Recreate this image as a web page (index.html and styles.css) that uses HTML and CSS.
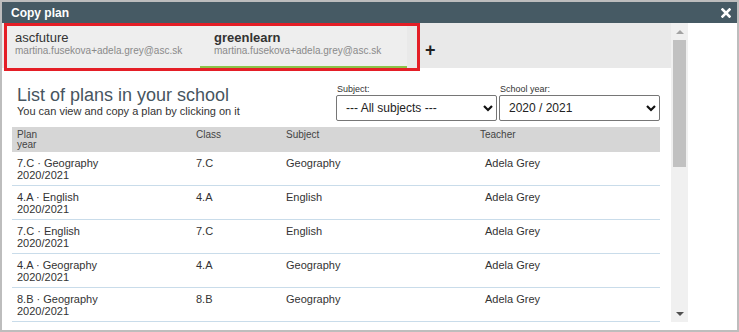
FILE: index.html
```html
<!DOCTYPE html>
<html lang="en">
<head>
  <meta charset="UTF-8" />
  <title>Copy plan</title>
  <link rel="stylesheet" href="styles.css">
</head>
<body>
  <div class="dialog">
    <div class="dialog-title">
      <span>Copy plan</span>
      <svg class="close" width="10" height="10" viewBox="0 0 10 10"><path d="M1.5 1.5 L8.5 8.5 M8.5 1.5 L1.5 8.5" stroke="#fff" stroke-width="2.6" stroke-linecap="square"/></svg>
    </div>
    <div class="dialog-body">
      <div class="scroll-area">
        <div class="scroll-content">
          <div class="tabs">
            <div class="tab">
              <div class="tab-name">ascfuture</div>
              <div class="tab-mail">martina.fusekova+adela.grey@asc.sk</div>
            </div>
            <div class="tab active">
              <div class="tab-name">greenlearn</div>
              <div class="tab-mail">martina.fusekova+adela.grey@asc.sk</div>
            </div>
            <div class="tab-add">+</div>
          </div>

          <div class="filters">
            <div class="title-block">
              <h2>List of plans in your school</h2>
              <p>You can view and copy a plan by clicking on it</p>
            </div>
            <div class="selects">
              <div class="field">
                <label>Subject:</label>
                <div class="select"><span>--- All subjects ---</span>
                  <svg width="10" height="7" viewBox="0 0 10 7"><polyline points="1,1 5,5 9,1" fill="none" stroke="#111" stroke-width="2.2"/></svg>
                </div>
              </div>
              <div class="field">
                <label>School year:</label>
                <div class="select"><span>2020 / 2021</span>
                  <svg width="10" height="7" viewBox="0 0 10 7"><polyline points="1,1 5,5 9,1" fill="none" stroke="#111" stroke-width="2.2"/></svg>
                </div>
              </div>
            </div>
          </div>

          <table class="plans">
            <colgroup>
              <col style="width:179px"><col style="width:90px"><col style="width:194px"><col>
            </colgroup>
            <thead>
              <tr><th>Plan<br>year</th><th>Class</th><th>Subject</th><th>Teacher</th></tr>
            </thead>
            <tbody>
              <tr><td>7.C · Geography<br>2020/2021</td><td>7.C</td><td>Geography</td><td class="teacher">Adela Grey</td></tr>
              <tr><td>4.A · English<br>2020/2021</td><td>4.A</td><td>English</td><td class="teacher">Adela Grey</td></tr>
              <tr><td>7.C · English<br>2020/2021</td><td>7.C</td><td>English</td><td class="teacher">Adela Grey</td></tr>
              <tr><td>4.A · Geography<br>2020/2021</td><td>4.A</td><td>Geography</td><td class="teacher">Adela Grey</td></tr>
              <tr><td>8.B · Geography<br>2020/2021</td><td>8.B</td><td>Geography</td><td class="teacher">Adela Grey</td></tr>
            </tbody>
          </table>
        </div>
        <div class="scrollbar">
          <div class="arrow up"></div>
          <div class="track"><div class="thumb"></div></div>
          <div class="arrow down"></div>
        </div>
      </div>
      <div class="highlight"></div>
    </div>
  </div>
</body>
</html>
```

FILE: styles.css
```css
body, html {
  margin: 0; padding: 0;
  font-family: "Liberation Sans", Arial, sans-serif;
  background: #fff;
}
.dialog {
  width: 739px;
  height: 332px;
  box-sizing: border-box;
  border: 2px solid #bdbdbd;
  display: flex;
  flex-direction: column;
}
.dialog-title {
  background: #465a64;
  color: #fff;
  height: 21px;
  display: flex;
  justify-content: space-between;
  align-items: center;
  padding: 0 6px 0 9px;
  font-size: 12px;
  font-weight: bold;
}
.dialog-body {
  position: relative;
  flex: 1;
}
.scroll-area {
  display: flex;
  height: 299px;
  width: 686px;
}
.scroll-content {
  width: 669px;
  overflow: hidden;
}

/* tabs */
.tabs {
  display: flex;
  align-items: stretch;
  background: #e9e9e9;
  height: 45px;
}
.tab {
  background: #eeeeee;
  padding: 7px 17px 0 13px;
  box-sizing: border-box;
  width: 198px;
}
.tab.active {
  width: 207px;
  padding-left: 14px;
  border-bottom: 2px solid #8bc34a;
}
.tab-name {
  font-size: 13px;
  line-height: 15px;
  color: #333;
}
.tab.active .tab-name {
  font-weight: bold;
}
.tab-mail {
  font-size: 10px;
  line-height: 12px;
  color: #8a8a8a;
  white-space: nowrap;
}
.tab-add {
  font-size: 18px;
  font-weight: bold;
  color: #222;
  margin-left: 18px;
  padding-top: 18px;
  line-height: 18px;
}

/* filters */
.filters {
  display: flex;
  justify-content: space-between;
  padding: 16px 11px 0 15px;
}
.title-block h2 {
  margin: 1px 0 0;
  font-size: 18px;
  line-height: 20px;
  font-weight: normal;
  color: #47555f;
}
.title-block p {
  margin: 0;
  font-size: 11px;
  line-height: 13px;
  color: #333;
}
.selects {
  display: flex;
  gap: 2px;
}
.field label {
  display: block;
  font-size: 9px;
  line-height: 11px;
  color: #333;
  padding-left: 1px;
}
.select {
  width: 161px;
  height: 26px;
  box-sizing: border-box;
  border: 1px solid #767676;
  border-radius: 2px;
  display: flex;
  justify-content: space-between;
  align-items: center;
  padding: 0 3px 0 9px;
  font-size: 12px;
  color: #222;
}

/* table */
.plans {
  width: 648px;
  margin: 6px 0 0 10px;
  border-collapse: collapse;
  table-layout: fixed;
}
.plans th {
  background: #d6d6d6;
  font-size: 10px;
  line-height: 10px;
  font-weight: normal;
  color: #444;
  text-align: left;
  vertical-align: top;
  padding: 3px 5px 2px;
}
.plans td {
  font-size: 11px;
  line-height: 12px;
  color: #333;
  vertical-align: top;
  padding: 5px 5px 4px;
  border-bottom: 1px solid #c9dcea;
}
.plans td.teacher {
  padding-left: 10px;
}

/* fake scrollbar */
.scrollbar {
  width: 17px;
  background: #f0f0f0;
  display: flex;
  flex-direction: column;
}
.arrow {
  height: 17px;
  display: flex;
  justify-content: center;
  align-items: center;
}
.arrow.up::after {
  content: "";
  border-left: 4px solid transparent;
  border-right: 4px solid transparent;
  border-bottom: 4px solid #a3a3a3;
}
.arrow.down::after {
  content: "";
  border-left: 4px solid transparent;
  border-right: 4px solid transparent;
  border-top: 4px solid #505050;
}
.track {
  flex: 1;
  padding: 0 2px;
}
.thumb {
  height: 127px;
  background: #c1c1c1;
}

/* annotation frame */
.highlight {
  position: absolute;
  left: 2px;
  top: 0;
  width: 410px;
  height: 42px;
  border: 3px solid #e41e26;
}
```
